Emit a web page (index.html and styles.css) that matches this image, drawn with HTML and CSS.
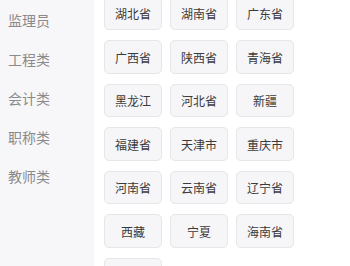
FILE: index.html
```html
<!DOCTYPE html>
<html>
<head>
<meta charset="utf-8">
<link rel="stylesheet" href="styles.css">
</head>
<body>
<div class="page">
  <div class="sidebar">
    <div class="cat">监理员</div>
    <div class="cat">工程类</div>
    <div class="cat">会计类</div>
    <div class="cat">职称类</div>
    <div class="cat">教师类</div>
  </div>
  <div class="main">
    <div class="grid">
      <div class="item">湖北省</div>
      <div class="item">湖南省</div>
      <div class="item">广东省</div>
      <div class="item">广西省</div>
      <div class="item">陕西省</div>
      <div class="item">青海省</div>
      <div class="item">黑龙江</div>
      <div class="item">河北省</div>
      <div class="item">新疆</div>
      <div class="item">福建省</div>
      <div class="item">天津市</div>
      <div class="item">重庆市</div>
      <div class="item">河南省</div>
      <div class="item">云南省</div>
      <div class="item">辽宁省</div>
      <div class="item">西藏</div>
      <div class="item">宁夏</div>
      <div class="item">海南省</div>
      <div class="item"></div>
    </div>
  </div>
</div>
</body>
</html>
```
FILE: styles.css
```css
html, body {
  margin: 0;
  padding: 0;
  background: #ffffff;
  height: 100%;
  overflow: hidden;
}
.page {
  display: flex;
  height: 266px;
  font-family: "Noto Sans CJK SC", "Noto Sans", sans-serif;
}
.sidebar {
  width: 94px;
  flex: none;
  background: #f7f7f9;
  display: flex;
  flex-direction: column;
}
.cat {
  height: 39px;
  line-height: 39px;
  padding-left: 8px;
  font-size: 14px;
  color: #8a8a8a;
}
.sidebar .cat:first-child {
  margin-top: 0.5px;
}
.main {
  flex: 1;
  padding-left: 10px;
  overflow: hidden;
}
.grid {
  display: grid;
  grid-template-columns: repeat(3, 58px);
  grid-auto-rows: 33.5px;
  column-gap: 8px;
  row-gap: 10px;
  margin-top: -3.2px;
}
.item {
  box-sizing: border-box;
  background: #f6f6f8;
  border: 1px solid #e6e6e8;
  border-radius: 5px;
  display: flex;
  align-items: center;
  justify-content: center;
  font-size: 12px;
  color: #3a3a3a;
}
```
